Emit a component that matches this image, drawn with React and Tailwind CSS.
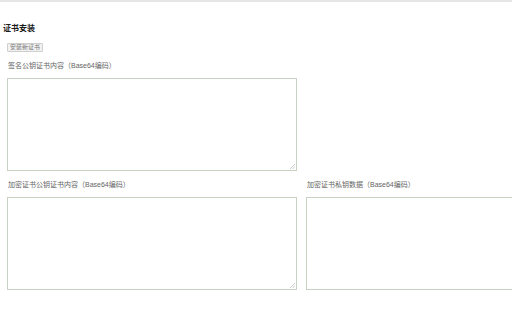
export default function App() {
  const font = { fontFamily: '"Liberation Sans", "Noto Sans CJK SC", sans-serif' };
  return (
    <div className="h-[320px] w-[512px] overflow-hidden bg-white" style={font}>
      <div className="h-[2px] w-full bg-[#e6e6e6]" />
      <div className="pl-[3px] pt-[22px]">
        <h3 className="text-[8px] font-bold leading-[10px] text-[#1a1a1a]">证书安装</h3>
        <div className="pl-[4px] pt-[9px]">
          <button
            type="button"
            className="block h-[9px] rounded-[1px] border border-[#cfcfcf] bg-[#f2f2f2] px-[2px] text-[6px] leading-[7px] text-[#777]"
          >
            安装新证书
          </button>
        </div>
        <div className="flex w-[600px] flex-wrap gap-x-[9px] pl-[4px] pt-[9px]">
          <Field label="签名公钥证书内容（Base64编码）" />
          <div className="w-[290px]" />
          <Field label="加密证书公钥证书内容（Base64编码）" />
          <Field label="加密证书私钥数据（Base64编码）" />
        </div>
      </div>
    </div>
  );
}

function Field({ label }) {
  return (
    <div className="w-[290px] pb-[9px]">
      <div className="pl-[1px] text-[7px] leading-[9px] text-[#666]">{label}</div>
      <div className="relative mt-[8px]">
        <textarea className="block h-[93px] w-[290px] resize-none border border-[#c6d2c2] bg-white outline-none" />
        <svg className="absolute bottom-[2px] right-[2px]" width="5" height="5" viewBox="0 0 5 5">
          <path d="M5 0 L0 5 M5 2.5 L2.5 5" stroke="#c0c0c0" strokeWidth="0.8" />
        </svg>
      </div>
    </div>
  );
}
